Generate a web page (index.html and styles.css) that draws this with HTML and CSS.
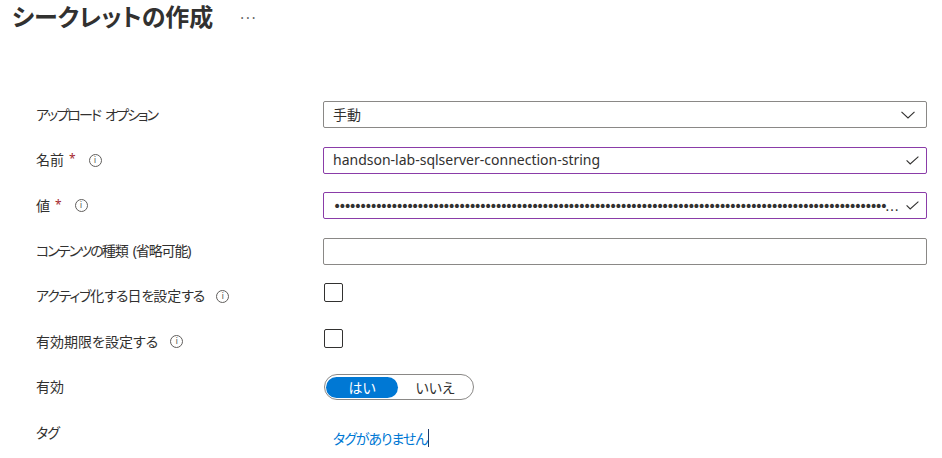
FILE: index.html
```html
<!DOCTYPE html>
<html lang="ja">
<head>
<meta charset="utf-8">
<title>シークレットの作成</title>
<link rel="stylesheet" href="styles.css">
</head>
<body>
<header class="header">
  <h1 class="title">シークレットの作成</h1>
  <span class="more">···</span>
</header>
<main class="form">
  <div class="label"><span class="kana wide">アップロード</span><span class="kana wide sp">オプション</span></div>
  <div class="field select">
    <span class="value">手動</span>
    <svg class="chev" width="14" height="8" viewBox="0 0 14 8"><path d="M0.5 0.8 L7 7 L13.5 0.8" fill="none" stroke="#323130" stroke-width="1.1"/></svg>
  </div>

  <div class="label">名前<span class="req">*</span><span class="info">i</span></div>
  <div class="field valid">
    <span class="value">handson-lab-sqlserver-connection-string</span>
    <svg class="check" width="13" height="9" viewBox="0 0 13 9"><path d="M0.6 4.4 L4.2 8 L12.4 0.6" fill="none" stroke="#323130" stroke-width="1.1"/></svg>
  </div>

  <div class="label">値<span class="req">*</span><span class="info">i</span></div>
  <div class="field valid">
    <span class="value dots">••••••••••••••••••••••••••••••••••••••••••••••••••••••••••••••••••••••••••••••••••••••••••••••••••••••••••••••••••••••••••••••••••••••••••••••••••••••••••••</span>
    <svg class="check" width="13" height="9" viewBox="0 0 13 9"><path d="M0.6 4.4 L4.2 8 L12.4 0.6" fill="none" stroke="#323130" stroke-width="1.1"/></svg>
  </div>

  <div class="label tight"><span class="kana">コンテンツの</span><span>種類</span><span class="paren">(省略可能)</span></div>
  <div class="field"></div>

  <div class="label"><span class="kana">アクティブ</span>化<span class="kana">する</span>日<span class="kana">を</span>設定<span class="kana">する</span><span class="info gap">i</span></div>
  <div class="cell"><span class="checkbox"></span></div>

  <div class="label">有効期限を設定する<span class="info gap">i</span></div>
  <div class="cell"><span class="checkbox"></span></div>

  <div class="label">有効</div>
  <div class="cell">
    <div class="toggle">
      <span class="opt on">はい</span>
      <span class="opt">いいえ</span>
    </div>
  </div>

  <div class="label"><span class="kana">タグ</span></div>
  <div class="cell tags"><span class="link kana">タグがありません</span><span class="caret"></span></div>
</main>
</body>
</html>
```
FILE: styles.css
```css
html, body {
  margin: 0;
  padding: 0;
  background: #ffffff;
}
body {
  font-family: "Noto Sans", "Noto Sans CJK JP", sans-serif;
  color: #323130;
  font-size: 14px;
  font-feature-settings: "palt";
}
.header {
  display: flex;
  align-items: center;
  height: 34px;
  padding-left: 12px;
}
.title {
  margin: 0;
  font-size: 24px;
  font-weight: 700;
  line-height: 32px;
  color: #323130;
}
.more {
  margin-left: 27px;
  font-size: 14px;
  color: #605e5c;
  letter-spacing: 2px;
}
.form {
  display: grid;
  grid-template-columns: 287px 604px;
  grid-auto-rows: 45.45px;
  align-items: center;
  padding-left: 36px;
  margin-top: 58px;
}
.label {
  display: flex;
  align-items: center;
  font-size: 14px;
  line-height: 20px;
  white-space: pre;
}
.label.tight {
  letter-spacing: -1.1px;
}
.kana {
  letter-spacing: -1.1px;
}
.label.tight .kana {
  letter-spacing: -1.9px;
}
.paren {
  margin-left: 5px;
}
.kana.wide {
  letter-spacing: -1.9px;
}
.kana.sp {
  margin-left: 5px;
}
.req {
  color: #a4262c;
  font-size: 12px;
  margin-left: 5px;
  position: relative;
  top: -1px;
}
.info {
  display: inline-flex;
  align-items: center;
  justify-content: center;
  width: 11px;
  height: 11px;
  border: 1px solid #605e5c;
  border-radius: 50%;
  font-size: 9px;
  line-height: 1;
  font-family: "DejaVu Sans", sans-serif;
  color: #605e5c;
  margin-left: 13px;
  letter-spacing: 0;
}
.info.gap {
  margin-left: 12px;
}
.field {
  box-sizing: border-box;
  height: 27px;
  border: 1px solid #8a8886;
  border-radius: 2px;
  display: flex;
  align-items: center;
  padding: 0 7px 0 9px;
  min-width: 0;
}
.field.valid {
  border-color: #8a3ca8;
}
.value {
  flex: 1;
  min-width: 0;
  white-space: nowrap;
  overflow: hidden;
  text-overflow: ellipsis;
  font-size: 14px;
  line-height: 20px;
}
.dots {
  font-family: "DejaVu Sans", sans-serif;
  font-size: 14px;
  letter-spacing: -3.05px;
}
.chev {
  margin-right: 4px;
}
.check {
  margin-left: 3px;
}
.cell {
  display: flex;
  align-items: center;
}
.checkbox {
  box-sizing: border-box;
  width: 19px;
  height: 19px;
  border: 1px solid #323130;
  border-radius: 2px;
  margin-left: 1px;
  margin-bottom: 7px;
}
.toggle {
  box-sizing: border-box;
  width: 150px;
  height: 26px;
  border: 1px solid #8a8886;
  border-radius: 13px;
  display: flex;
  align-items: center;
  padding: 0 1px;
  margin-left: 1px;
}
.opt {
  flex: 1;
  height: 21px;
  display: flex;
  align-items: center;
  justify-content: center;
  font-size: 14px;
  color: #323130;
  border-radius: 11px;
}
.opt.on {
  flex: 0 0 72px;
  background: #0078d4;
  color: #ffffff;
}
.tags {
  padding-left: 10px;
  padding-top: 10px;
}
.link {
  color: #0078d4;
  font-size: 14px;
}
.caret {
  display: inline-block;
  width: 1px;
  height: 18px;
  background: #1b3a6b;
  margin-left: 1px;
}
```
